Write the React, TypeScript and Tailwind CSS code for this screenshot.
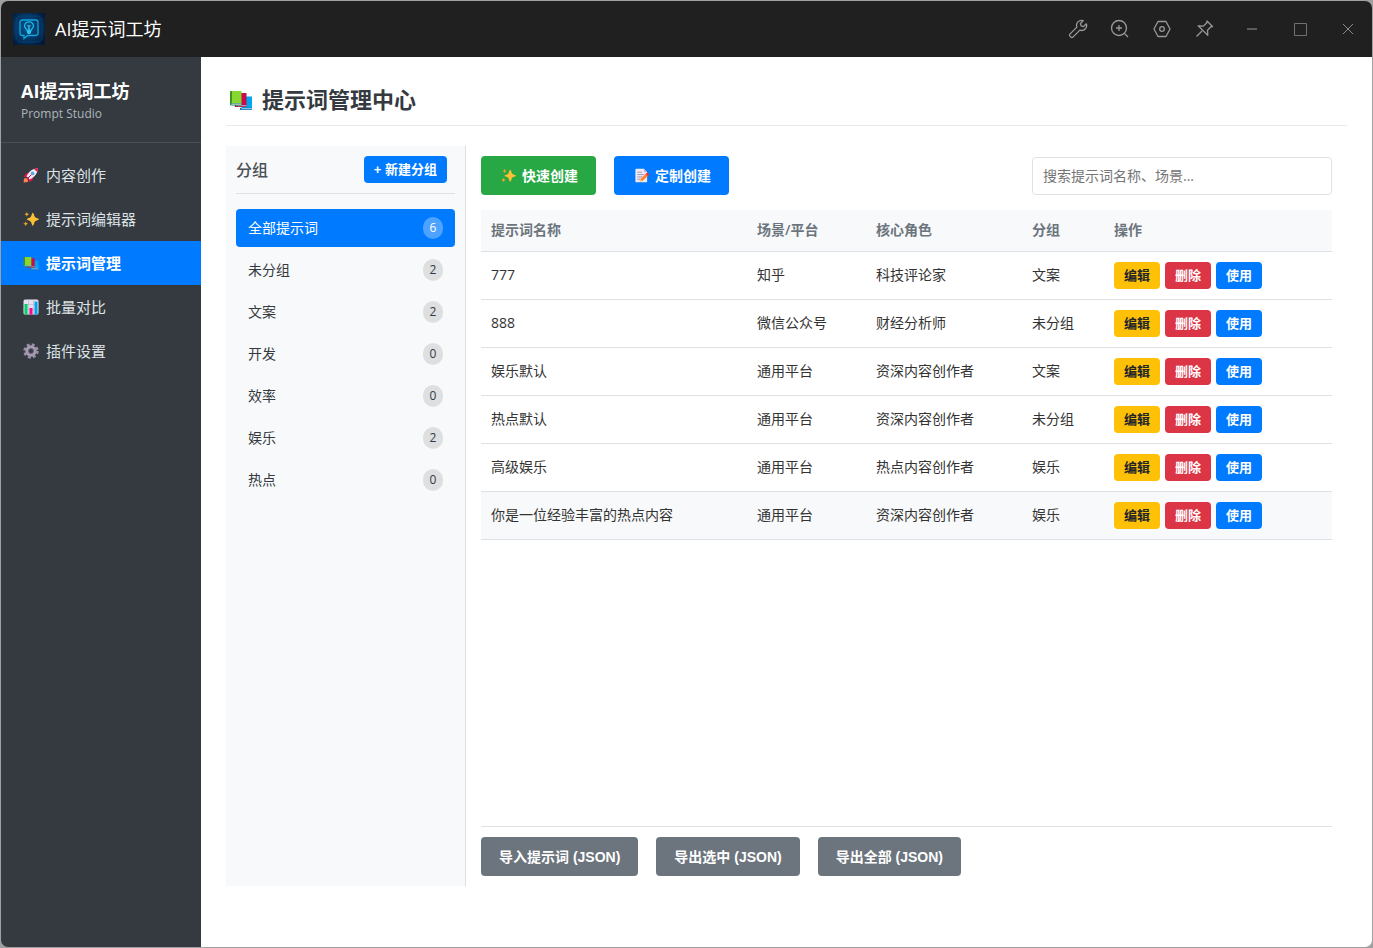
import { useState } from 'react';
import type { ReactNode } from 'react';

type Prompt = {
  name: string;
  platform: string;
  role: string;
  group: string;
};

const prompts: Prompt[] = [
  { name: '777', platform: '知乎', role: '科技评论家', group: '文案' },
  { name: '888', platform: '微信公众号', role: '财经分析师', group: '未分组' },
  { name: '娱乐默认', platform: '通用平台', role: '资深内容创作者', group: '文案' },
  { name: '热点默认', platform: '通用平台', role: '资深内容创作者', group: '未分组' },
  { name: '高级娱乐', platform: '通用平台', role: '热点内容创作者', group: '娱乐' },
  { name: '你是一位经验丰富的热点内容', platform: '通用平台', role: '资深内容创作者', group: '娱乐' }
];

const groups = [
  { name: '全部提示词', count: 6 },
  { name: '未分组', count: 2 },
  { name: '文案', count: 2 },
  { name: '开发', count: 0 },
  { name: '效率', count: 0 },
  { name: '娱乐', count: 2 },
  { name: '热点', count: 0 }
];

function AppLogo() {
  return (
    <svg viewBox="0 0 32 32" className="w-8 h-8" aria-hidden="true">
      <defs>
        <radialGradient id="logoBg" cx="0.45" cy="0.45" r="0.65">
          <stop offset="0" stopColor="#06558f" />
          <stop offset="0.6" stopColor="#043462" />
          <stop offset="1" stopColor="#021a38" />
        </radialGradient>
      </defs>
      <rect width="32" height="32" fill="url(#logoBg)" />
      <rect x="3" y="3" width="26" height="26" rx="5" fill="none" stroke="#07508a" strokeWidth="0.8" opacity="0.7" />
      <path d="M9.500 7h13a2.500 2.500 0 0 1 2.500 2.500v10.500a2.500 2.500 0 0 1-2.500 2.500h-8l-3.500 3v-3h-1.500a2.500 2.500 0 0 1-2.500-2.500v-10.500a2.500 2.500 0 0 1 2.500-2.500z" fill="none" stroke="#12a5dc" strokeWidth="1.300" />
      <path d="M14 17.500c0-1.500-2.500-2.200-2.500-4.400a4.500 4.300 0 0 1 9 0c0 2.200-2.500 2.900-2.500 4.400z" fill="none" stroke="#19b9e6" strokeWidth="1.300" />
      <path d="M16 17v-3.500l-1.500-1.500M16 13.500l1.500-1.500" fill="none" stroke="#5fdcf7" strokeWidth="1" />
      <path d="M14 17.500h4v2.500l-1 1h-2l-1-1z" fill="#2cc4ec" />
    </svg>
  );
}

function Rocket({ className }: { className: string }) {
  return (
    <svg viewBox="0 0 16 16" className={className} aria-hidden="true">
      <path d="M1 11.500l3-.8 1.500 1.600-.8 2.700L.6 15.600z" fill="#ff8257" />
      <path d="M6.500 5.500L3 6.500.8 9.800l3.700.2zM10.500 9.500L9.500 13l-3.300 2.200-.2-3.700z" fill="#e0144c" />
      <path d="M3.500 9.500C5.500 5 8.500 2 14 1.200 14.500 1.100 15 1.500 14.900 2 14 7.500 11 10.500 6.500 12.500z" fill="#f1ecf7" />
      <path d="M11 1.900c1-.4 2-.6 3-.7.500-.1 1 .3.900.8-.1 1-.4 2-.7 3z" fill="#e0144c" />
      <path d="M3.500 9.500l3 3-1.300.6-2.300-2.300z" fill="#b4003c" />
      <circle cx="9.600" cy="6.400" r="1.900" fill="#7ba3c9" />
      <circle cx="9.600" cy="6.400" r="1.200" fill="#45b5f5" />
      <path d="M8.200 7.800l-4 4.200" stroke="#c4003d" strokeWidth="1" />
    </svg>
  );
}

function Sparkles({ className }: { className: string }) {
  return (
    <svg viewBox="0 0 16 16" className={className} aria-hidden="true" fill="#fcc234">
      <path d="M9.800 1.800c.3 0 .5.200.6.500l1.200 3.300c.2.500.5.800 1 1l2.900 1.100c.5.200.5.900 0 1.100l-2.900 1.100c-.5.200-.8.500-1 1l-1.200 3.300c-.2.600-1 .6-1.200 0L8 10.900c-.2-.5-.5-.8-1-1L4.200 8.800c-.5-.2-.5-.9 0-1.100L7 6.600c.5-.2.800-.5 1-1l1.200-3.300c.1-.3.300-.5.600-.5z" />
      <path d="M3.800.9l.7 1.700 1.700.7-1.700.7-.7 1.700L3.100 4l-1.700-.7 1.700-.7z" fill="#f5a623" />
      <path d="M2.700 10.400l.7 1.700 1.700.7-1.700.7-.7 1.700-.7-1.700-1.700-.7L2 12.100z" fill="#f5a623" />
    </svg>
  );
}

function Books({ className }: { className: string }) {
  return (
    <svg viewBox="0 0 24 22" className={className} aria-hidden="true">
      <path d="M16 7.500h7V19H12.500z" fill="#00a6ed" />
      <path d="M11.500 18.800H23v2.200H12c-.8 0-1.200-.5-1.200-1.100s.2-.9.700-1.100z" fill="#0074ba" />
      <path d="M12.500 19.300H23v1H12.500z" fill="#c5d8e6" />
      <path d="M11 4h6.500v12H9z" fill="#ca0b4a" />
      <path d="M6.500 15.800h11V18H7c-.8 0-1.300-.5-1.300-1.100s.3-.9.800-1.100z" fill="#990838" />
      <path d="M7.200 16.300h10.300v1H7.200z" fill="#d9c8d2" />
      <path d="M2 2h10.500v12.500H1z" fill="#86d72f" />
      <path d="M1.800 2H3v12.500H1V2.800c0-.5.300-.8.800-.8z" fill="#44911b" />
      <path d="M1 14h11.500v2.500H2.200c-.8 0-1.200-.5-1.200-1.200z" fill="#008463" />
      <path d="M2.200 14.600h10.300v1.200H2.200z" fill="#d3d3d3" />
    </svg>
  );
}

function BarChart({ className }: { className: string }) {
  return (
    <svg viewBox="0 0 16 16" className={className} aria-hidden="true">
      <rect x="0.500" y="0.500" width="15" height="15" rx="1.500" fill="#e6e0ee" />
      <path d="M.5 5.500h15M.5 10.500h15M5.500.5v15M10.500.5v15" stroke="#c3b7cd" strokeWidth="0.700" />
      <path d="M1.500 5h3v10.500h-3z" fill="#00d26a" />
      <path d="M6.500 9h3v6.500h-3z" fill="#f70a8d" />
      <path d="M11.500 2.500h3v13h-3z" fill="#00a6ed" />
    </svg>
  );
}

function Gear({ className }: { className: string }) {
  return (
    <svg viewBox="0 0 16 16" className={className} aria-hidden="true">
      <circle cx="8" cy="8" r="6.500" fill="none" stroke="#9b8fa8" strokeWidth="2.400" strokeDasharray="2.900 2.200" />
      <circle cx="8" cy="8" r="4.200" fill="none" stroke="#a79bb3" strokeWidth="3" />
      <circle cx="8" cy="8" r="2.400" fill="none" stroke="#7d7189" strokeWidth="0.600" />
    </svg>
  );
}

function Memo({ className }: { className: string }) {
  return (
    <svg viewBox="0 0 16 16" className={className} aria-hidden="true">
      <path d="M2.500.8h8L14 4.300v10c0 .6-.4 1-1 1H2.500c-.6 0-1-.4-1-1V1.800c0-.6.4-1 1-1z" fill="#f0eaf6" />
      <path d="M10.500.8L14 4.300h-3c-.3 0-.5-.2-.5-.5z" fill="#bba9cc" />
      <path d="M3.500 4.500h5M3.500 7h7M3.500 9.500h5M3.500 12h3" stroke="#a08fb5" strokeWidth="1" />
      <path d="M12.300 6.400l2.500 2.500-6 5-2.800.8.700-2.900z" fill="#ff822d" />
      <path d="M12.300 6.400l1-1c.4-.4 1-.4 1.400 0l1 1c.4.400.4 1 0 1.400l-1 1.100z" fill="#f8312f" />
      <path d="M6.700 11.800l1.900 2-2.600.9z" fill="#ffce7c" />
    </svg>
  );
}

const navItems = [
  { label: '内容创作', Icon: Rocket },
  { label: '提示词编辑器', Icon: Sparkles },
  { label: '提示词管理', Icon: Books },
  { label: '批量对比', Icon: BarChart },
  { label: '插件设置', Icon: Gear }
];

function TitleButton({ label, children }: { label: string; children: ReactNode }) {
  return (
    <button type="button" aria-label={label} className="flex items-center justify-center w-6 h-6">
      <svg viewBox="0 0 20 20" className="w-5 h-5" fill="none" stroke="currentColor" strokeWidth="1.3" strokeLinejoin="round">
        {children}
      </svg>
    </button>
  );
}

function TitleBar() {
  return (
    <header className="flex items-center justify-between h-14 shrink-0 px-3 bg-[#202020]">
      <div className="flex items-center gap-[10px]">
        <AppLogo />
        <span className="text-lg leading-6 text-white">AI提示词工坊</span>
      </div>
      <div className="flex items-center gap-6">
        <div className="flex items-center gap-[18px] text-[#999999]">
          <TitleButton label="调试">
            <path d="M15.200 1.700a4.900 4.900 0 0 0-6.300 6.400L1.900 15.100a1.400 1.400 0 0 0 0 2l1 1a1.400 1.400 0 0 0 2 0l7-7a4.900 4.900 0 0 0 6.400-6.300l-2.800 2.800-2.400-.7-.7-2.400z" />
          </TitleButton>
          <TitleButton label="放大">
            <circle cx="9" cy="9" r="7.500" />
            <path d="M14.400 14.400l3.600 3.600M9 6v6M6 9h6" />
          </TitleButton>
          <TitleButton label="设置">
            <path d="M6 2.500h8l4 7.500-4 7.500H6L2 10z" />
            <circle cx="10" cy="10" r="2.300" />
          </TitleButton>
          <TitleButton label="置顶">
            <path d="M13 2l5.500 5.500-1.600.3-3.400 3.400.3 5.200-9.600-9.600 5.200.3 3.400-3.400zM8 12l-5.500 5.500" />
          </TitleButton>
        </div>
        <div className="flex items-center gap-6 text-[#707070]">
          <TitleButton label="最小化">
            <path d="M5 10h10" />
          </TitleButton>
          <TitleButton label="最大化">
            <path d="M4.500 4.500h12v12h-12z" strokeWidth="1" />
          </TitleButton>
          <TitleButton label="关闭">
            <path d="M5 5l10 10M15 5L5 15" stroke="#8a8a8a" strokeWidth="1" />
          </TitleButton>
        </div>
      </div>
    </header>
  );
}

function Sidebar() {
  return (
    <aside className="w-[200px] shrink-0 bg-[#343a40]">
      <div className="px-5 py-5 border-b border-[#495057]">
        <h2 className="text-lg leading-7 font-bold text-white">AI提示词工坊</h2>
        <p className="text-xs leading-[17px] text-[#adb5bd]">Prompt Studio</p>
      </div>
      <nav className="pt-[10px]">
        {navItems.map(({ label, Icon }) => {
          const active = label === '提示词管理';
          return (
            <a
              key={label}
              href="#"
              className={`flex items-center gap-[5px] h-11 px-5 text-[15px] leading-6 ${active ? 'bg-[#007bff] text-white font-bold' : 'text-[#dee2e6]'}`}
            >
              <span className="flex justify-center w-5">
                <Icon className="w-4 h-4" />
              </span>
              {label}
            </a>
          );
        })}
      </nav>
    </aside>
  );
}

function GroupPanel() {
  const [current, setCurrent] = useState('全部提示词');
  return (
    <section className="w-60 shrink-0 p-[10px] bg-[#f8f9fa] border-r border-[#dee2e6]">
      <div className="flex items-center justify-between pr-2 pb-[10px] border-b border-[#dee2e6]">
        <h3 className="text-base leading-6 font-medium text-[#495057]">分组</h3>
        <button type="button" className="h-[27px] px-[10px] rounded bg-[#007bff] text-[13px] leading-5 font-bold text-white font-['Liberation_Sans','Noto_Sans_CJK_SC',sans-serif]">
          + 新建分组
        </button>
      </div>
      <ul className="flex flex-col gap-1 mt-[15px]">
        {groups.map(g => (
          <li key={g.name}>
            <button
              type="button"
              onClick={() => setCurrent(g.name)}
              className={`flex items-center justify-between w-full h-[38px] px-3 rounded text-sm ${current === g.name ? 'bg-[#007bff] text-white' : 'text-[#343a40]'}`}
            >
              {g.name}
              <span className={`flex items-center justify-center w-5 h-[22px] rounded-full text-xs ${current === g.name ? 'bg-white/30' : 'bg-black/10'}`}>
                {g.count}
              </span>
            </button>
          </li>
        ))}
      </ul>
    </section>
  );
}

const bigButton = "flex items-center h-[39px] px-[18px] rounded text-sm font-bold text-white font-['Liberation_Sans','Noto_Sans_CJK_SC',sans-serif]";
const rowButton = 'h-[27px] px-[10px] rounded text-[13px] leading-5 font-bold';

function PromptTable() {
  return (
    <table className="w-full table-fixed text-left text-sm">
      <colgroup>
        <col />
        <col className="w-[119px]" />
        <col className="w-[156px]" />
        <col className="w-[82px]" />
        <col className="w-[228px]" />
      </colgroup>
      <thead>
        <tr className="h-[41px] bg-[#f8f9fa] border-b border-[#dee2e6] text-[#6c757d]">
          {['提示词名称', '场景/平台', '核心角色', '分组', '操作'].map(h => (
            <th key={h} className="px-[10px] font-semibold">{h}</th>
          ))}
        </tr>
      </thead>
      <tbody>
        {prompts.map(p => (
          <tr key={p.name} className="h-12 border-b border-[#dee2e6] text-[#333333] last:bg-[#f8f9fa] hover:bg-[#f8f9fa]">
            <td className="px-[10px] truncate">{p.name}</td>
            <td className="px-[10px]">{p.platform}</td>
            <td className="px-[10px]">{p.role}</td>
            <td className="px-[10px]">{p.group}</td>
            <td className="px-[10px]">
              <div className="flex gap-[5px]">
                <button type="button" className={`${rowButton} bg-[#ffc107] text-[#212529]`}>编辑</button>
                <button type="button" className={`${rowButton} bg-[#dc3545] text-white`}>删除</button>
                <button type="button" className={`${rowButton} bg-[#007bff] text-white`}>使用</button>
              </div>
            </td>
          </tr>
        ))}
      </tbody>
    </table>
  );
}

export default function App() {
  return (
    <div className="min-h-screen flex flex-col bg-[#a0a0a0] font-['Open_Sans','Noto_Sans_CJK_SC',sans-serif]">
      <div className="flex-1 flex flex-col border border-[#a0a0a0] rounded-lg overflow-hidden">
        <TitleBar />
        <div className="flex-1 flex">
          <Sidebar />
          <main className="flex-1 min-w-0 flex flex-col px-[25px] pt-[26px] pb-[61px] bg-white">
            <div className="flex items-center gap-[6px] pb-[9px] border-b border-[#e9ecef]">
              <span className="flex justify-center w-[30px]">
                <Books className="w-6 h-[22px]" />
              </span>
              <h1 className="text-[22px] leading-[33px] font-bold text-[#343a40]">提示词管理中心</h1>
            </div>
            <div className="flex-1 flex mt-5">
              <GroupPanel />
              <section className="flex-1 min-w-0 flex flex-col px-[15px] py-[10px]">
                <div className="flex items-center justify-between mb-[15px]">
                  <div className="flex gap-[18px]">
                    <button type="button" className={`${bigButton} gap-1 bg-[#28a745]`}>
                      <span className="flex justify-center w-[19px]"><Sparkles className="w-[15px] h-[15px]" /></span>
                      快速创建
                    </button>
                    <button type="button" className={`${bigButton} gap-1 bg-[#007bff]`}>
                      <span className="flex justify-center w-[19px]"><Memo className="w-[15px] h-[15px]" /></span>
                      定制创建
                    </button>
                  </div>
                  <input
                    type="text"
                    aria-label="搜索提示词"
                    placeholder="搜索提示词名称、场景..."
                    className="w-[300px] h-[38px] px-[10px] border border-[#dee2e6] rounded text-sm placeholder:text-[#757575]"
                  />
                </div>
                <PromptTable />
                <div className="flex gap-[18px] mt-auto pt-[10px] border-t border-[#dee2e6]">
                  <button type="button" className={`${bigButton} bg-[#6c757d]`}>导入提示词 (JSON)</button>
                  <button type="button" className={`${bigButton} bg-[#6c757d]`}>导出选中 (JSON)</button>
                  <button type="button" className={`${bigButton} bg-[#6c757d]`}>导出全部 (JSON)</button>
                </div>
              </section>
            </div>
          </main>
        </div>
      </div>
    </div>
  );
}
